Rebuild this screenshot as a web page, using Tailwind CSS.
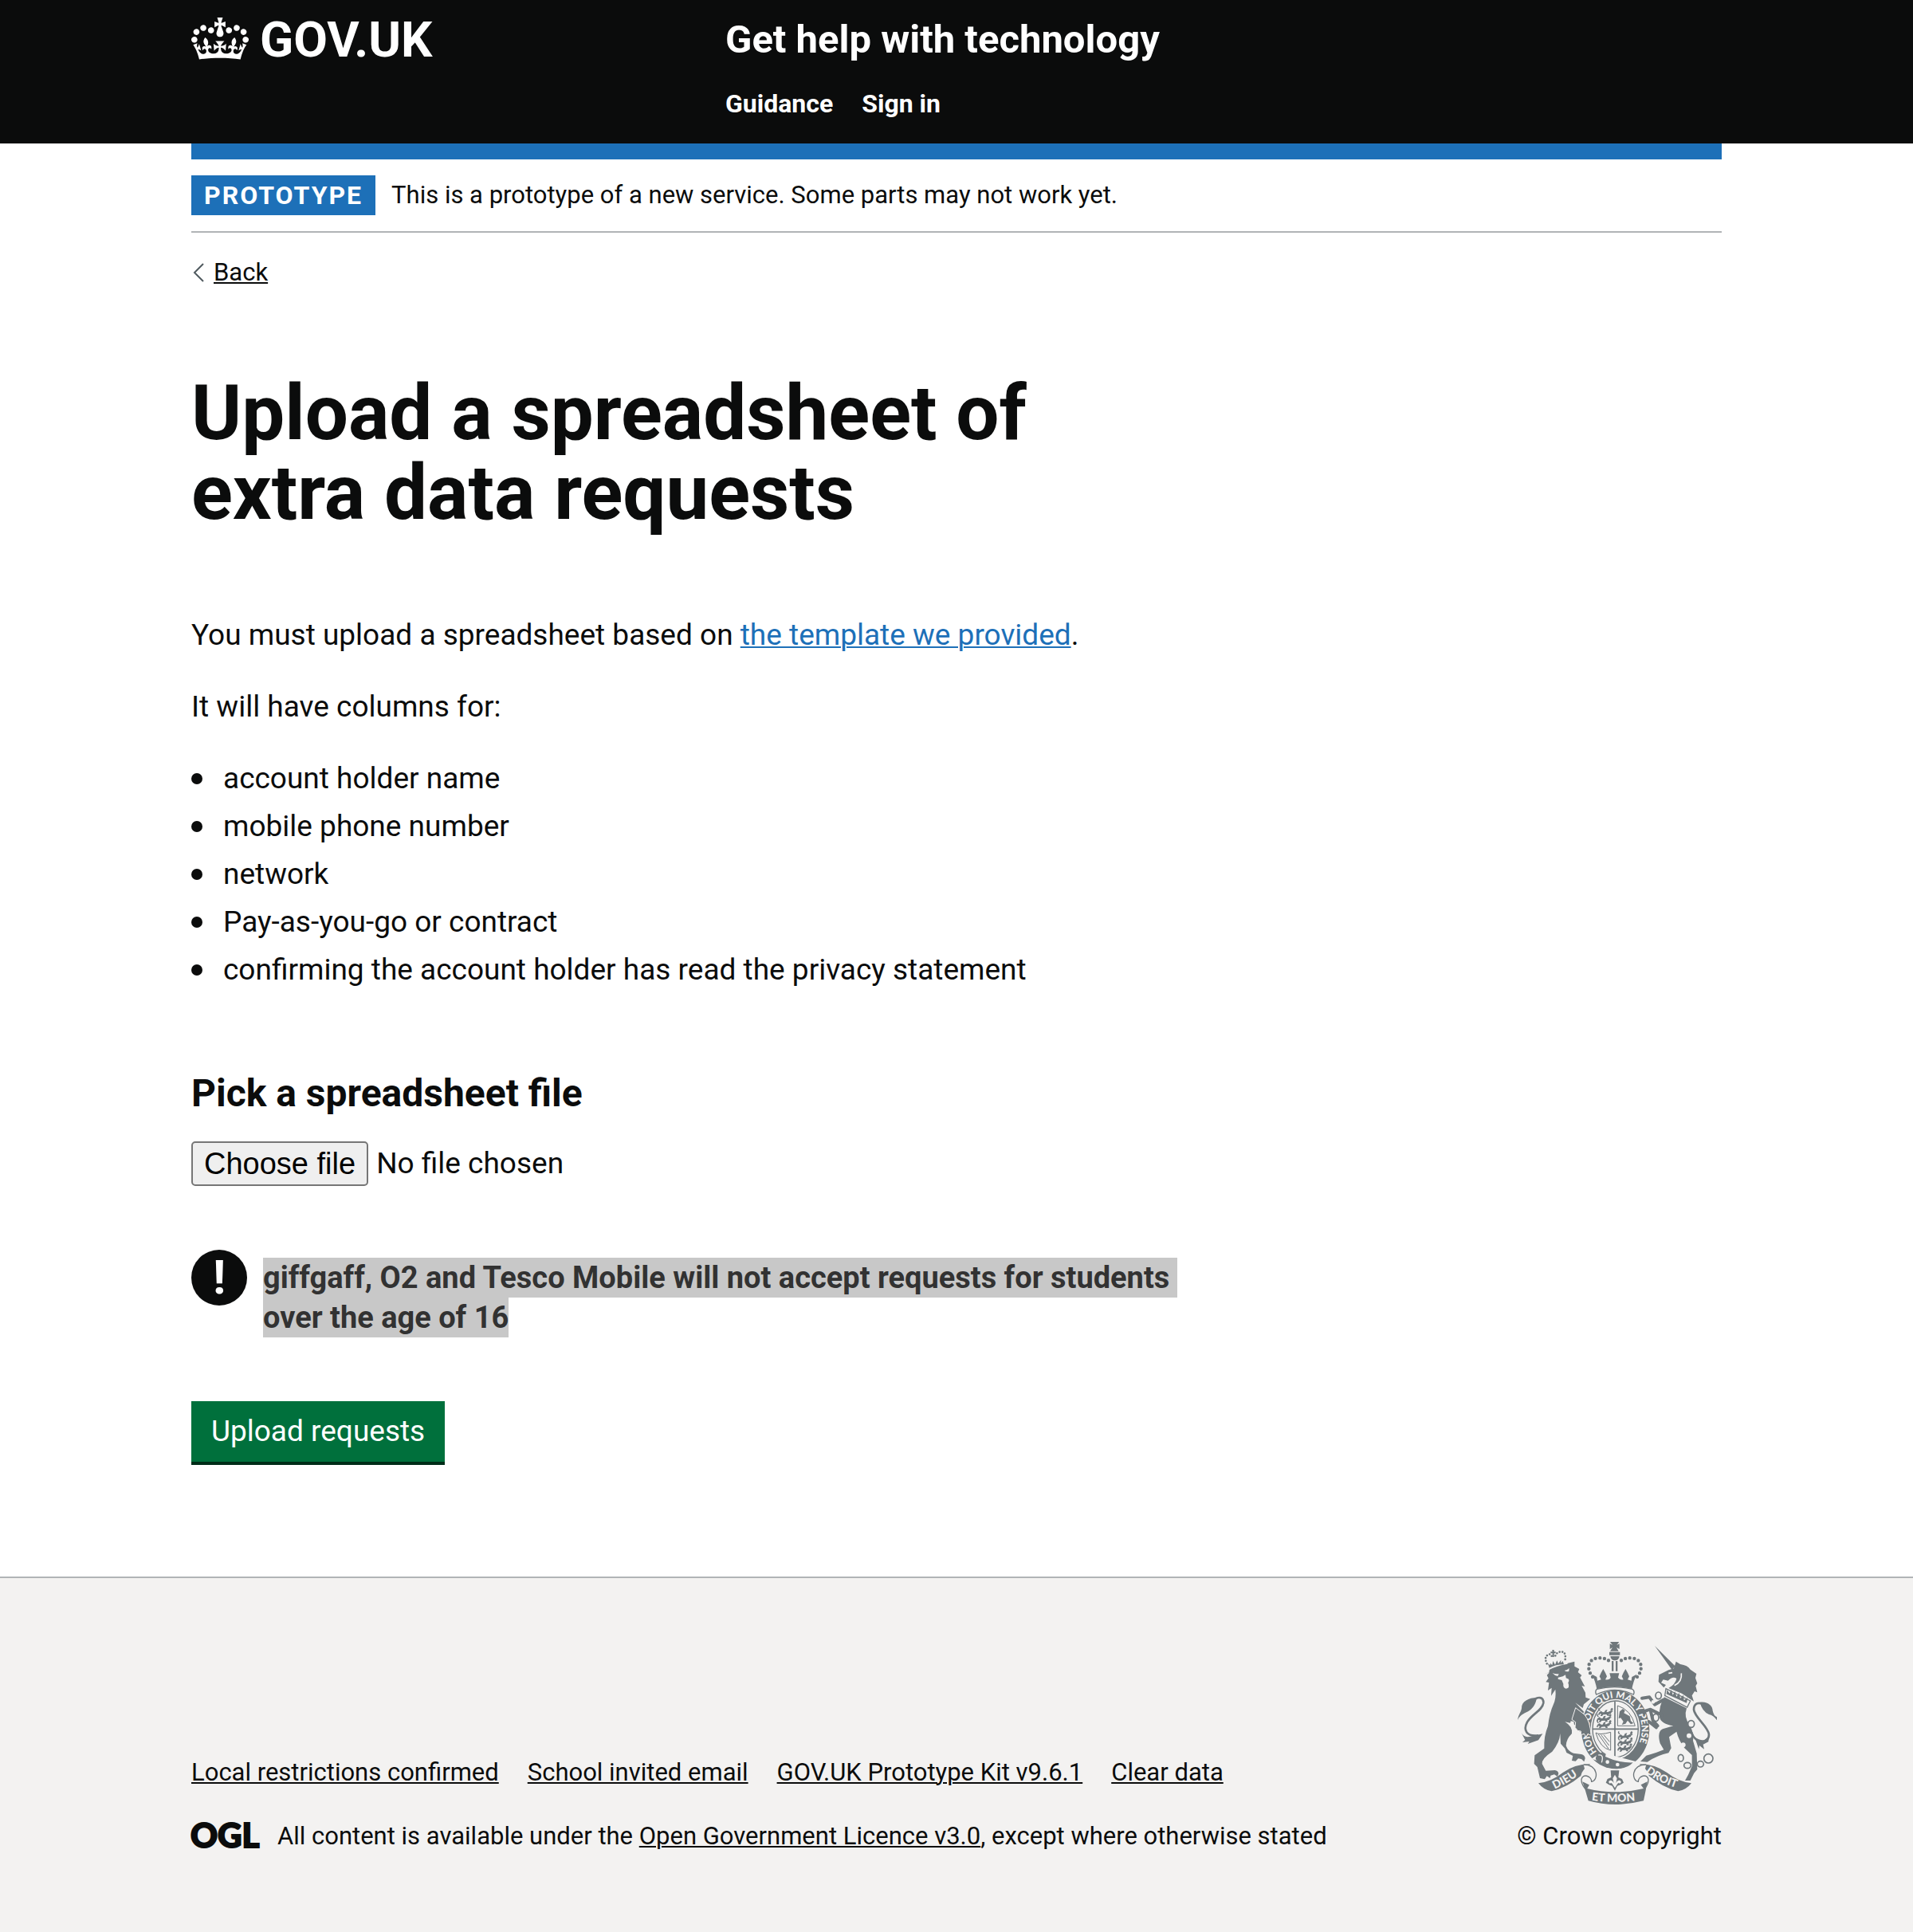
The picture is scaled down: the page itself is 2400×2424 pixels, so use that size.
<!DOCTYPE html>
<html lang="en">
<head>
<meta charset="utf-8">
<meta name="viewport" content="width=device-width, initial-scale=1">
<title>Upload a spreadsheet of extra data requests - Get help with technology</title>
<script src="https://cdn.jsdelivr.net/npm/@tailwindcss/browser@4"></script>
</head>
<body class="bg-white font-['Roboto',sans-serif] text-[37px] leading-[50px] text-[#0b0c0c]">

<header class="bg-[#0b0c0c] px-8 text-white">
  <div class="mx-auto flex max-w-[1920px] pt-5 pb-[30px]">
    <div class="w-1/3">
      <a href="#" class="flex h-[60px] items-center gap-[14px]" aria-label="GOV.UK">
        <svg class="mb-1 h-[53px] w-[72px]" viewBox="0 0 132 97" fill="currentColor" aria-hidden="true"><path fill-rule="evenodd" d="M25 30.2c3.5 1.5 7.7-.2 9.1-3.7 1.5-3.6-.2-7.8-3.9-9.2-3.6-1.4-7.6.3-9.1 3.9-1.4 3.5.3 7.5 3.9 9zM9 39.5c3.6 1.5 7.8-.2 9.2-3.7 1.5-3.6-.2-7.8-3.9-9.1-3.6-1.5-7.6.2-9.1 3.8-1.4 3.5.3 7.5 3.8 9zM4.4 57.2c3.5 1.5 7.7-.2 9.1-3.8 1.5-3.6-.2-7.7-3.9-9.1-3.5-1.5-7.6.3-9.1 3.8-1.4 3.5.3 7.6 3.9 9.1zm38.3-21.4c3.5 1.5 7.7-.2 9.1-3.8 1.5-3.6-.2-7.7-3.9-9.1-3.6-1.5-7.6.3-9.1 3.8-1.3 3.6.4 7.7 3.9 9.1zm64.4-5.6c-3.6 1.5-7.8-.2-9.1-3.7-1.5-3.6.2-7.8 3.8-9.2 3.6-1.4 7.7.3 9.2 3.9 1.3 3.5-.4 7.5-3.9 9zm15.9 9.3c-3.6 1.5-7.7-.2-9.1-3.7-1.5-3.6.2-7.8 3.7-9.1 3.6-1.5 7.7.2 9.2 3.8 1.5 3.5-.3 7.5-3.8 9zm4.7 17.7c-3.6 1.5-7.8-.2-9.2-3.8-1.5-3.6.2-7.7 3.9-9.1 3.6-1.5 7.7.3 9.2 3.8 1.3 3.5-.4 7.6-3.9 9.1zM89.3 35.8c-3.6 1.5-7.8-.2-9.2-3.8-1.4-3.6.2-7.7 3.9-9.1 3.6-1.5 7.7.3 9.2 3.8 1.4 3.6-.3 7.7-3.9 9.1zM69.7 17.7l8.9 4.7V9.3l-8.9 2.8c-.2-.3-.5-.6-.9-.9L72.4 0H59.6l3.5 11.2c-.3.3-.6.5-.9.9l-8.8-2.8v13.1l8.8-4.7c.3.3.6.7.9.9l-5 15.4v.1c-.2.8-.4 1.6-.4 2.4 0 4.1 3.1 7.5 7 8.1h.2c.3 0 .7.1 1 .1.4 0 .7 0 1-.1h.2c4-.6 7.1-4.1 7.1-8.1 0-.8-.1-1.7-.4-2.4V34l-5.1-15.4c.4-.2.7-.6 1-.9zM66 92.8c16.9 0 32.8 1.1 47.1 3.2 4-16.9 8.9-26.7 14-33.5l-9.6-3.4c1 4.9 1.1 7.2 0 10.2-1.5-1.4-3-4.3-4.2-8.7L108.6 76c2.8-2 5-3.2 7.5-3.3-4.4 9.4-10 11.9-13.6 11.2-4.3-.8-6.3-4.6-5.6-7.9 1-4.7 5.7-5.9 8-.5 4.3-8.7-3-11.4-7.6-8.8 7.1-7.2 7.9-13.5 2.1-21.1-8 6.1-8.1 12.3-4.5 20.8-4.7-5.4-12.1-2.5-9.5 6.2 3.4-5.2 7.9-2 7.2 3.1-.6 4.3-6.4 7.8-13.5 7.2-10.3-.9-10.9-8-11.2-13.8 2.5-.5 7.1 1.8 11 7.3L80.2 60c-4.1 4.4-8 5.3-12.3 5.4 1.4-4.4 8-11.6 8-11.6H55.5s6.4 7.2 7.9 11.6c-4.2-.1-8-1-12.3-5.4l1.4 16.4c3.9-5.5 8.5-7.7 10.9-7.3-.3 5.8-.9 12.8-11.1 13.8-7.2.6-12.9-2.9-13.5-7.2-.7-5 3.8-8.3 7.1-3.1 2.7-8.7-4.6-11.6-9.4-6.2 3.7-8.5 3.6-14.7-4.6-20.8-5.8 7.6-5 13.9 2.2 21.1-4.7-2.6-11.9.1-7.7 8.8 2.3-5.5 7.1-4.2 8.1.5.7 3.3-1.3 7.1-5.7 7.9-3.5.7-9-1.8-13.5-11.2 2.5.1 4.7 1.3 7.5 3.3l-4.7-15.4c-1.2 4.4-2.7 7.2-4.3 8.7-1.1-3-.9-5.3 0-10.2l-9.5 3.4c5 6.9 9.9 16.7 14 33.5 14.8-2.1 30.8-3.2 47.7-3.2z"/></svg>
        <span class="text-[62px] leading-[60px] font-bold">GOV.UK</span>
      </a>
    </div>
    <div class="w-2/3 pl-[30px]">
      <a href="#" class="block text-[49px] leading-[60px] font-bold">Get help with technology</a>
      <nav class="mt-[30px] flex gap-9 text-[32px] leading-10 font-bold" aria-label="Menu">
        <a href="#">Guidance</a>
        <a href="#">Sign in</a>
      </nav>
    </div>
  </div>
</header>

<div class="px-8">
  <div class="mx-auto max-w-[1920px]">
    <div class="h-5 bg-[#1d70b8]"></div>
    <div class="flex items-center gap-5 border-b-2 border-[#b1b4b6] py-5 text-[31px] leading-[50px]">
      <strong class="bg-[#1d70b8] px-4 text-[32px] font-bold tracking-[2px] text-white">PROTOTYPE</strong>
      <span>This is a prototype of a new service. Some parts may not work yet.</span>
    </div>
    <a href="#" class="mt-[30px] flex w-fit items-center gap-3 text-[31px] leading-10">
      <svg class="h-6 w-4" viewBox="0 0 16 24" fill="none" stroke="#505a5f" stroke-width="2" aria-hidden="true"><path d="M15 1 4 12l11 11"/></svg>
      <span class="underline decoration-2 underline-offset-2">Back</span>
    </a>

    <main class="w-2/3 pt-[106px] pb-[140px]">
      <h1 class="max-w-[1200px] text-[96px] leading-[100px] font-bold">Upload a spreadsheet of<br>extra data requests</h1>
      <p class="mt-[104px]">You must upload a spreadsheet based on <a href="#" class="text-[#1d70b8] underline decoration-2 underline-offset-2">the template we provided</a>.</p>
      <p class="mt-10">It will have columns for:</p>
      <ul class="mt-10 flex flex-col gap-[10px]">
        <li class="flex items-center gap-[26px] before:size-[14px] before:rounded-full before:bg-[#0b0c0c]">account holder name</li>
        <li class="flex items-center gap-[26px] before:size-[14px] before:rounded-full before:bg-[#0b0c0c]">mobile phone number</li>
        <li class="flex items-center gap-[26px] before:size-[14px] before:rounded-full before:bg-[#0b0c0c]">network</li>
        <li class="flex items-center gap-[26px] before:size-[14px] before:rounded-full before:bg-[#0b0c0c]">Pay-as-you-go or contract</li>
        <li class="flex items-center gap-[26px] before:size-[14px] before:rounded-full before:bg-[#0b0c0c]">confirming the account holder has read the privacy statement</li>
      </ul>
      <form>
        <label for="file" class="mt-[100px] block text-[48px] leading-[60px] font-bold">Pick a spreadsheet file</label>
        <div class="relative mt-[30px] flex h-14 w-fit items-center gap-[10px]">
          <span class="flex h-14 items-center rounded-[5px] border-2 border-[#767676] bg-[#efefef] px-[14px] font-['Liberation_Sans',sans-serif] text-[38px] text-black">Choose file</span>
          <span>No file chosen</span>
          <input id="file" type="file" class="absolute inset-0 size-full cursor-pointer opacity-0">
        </div>
        <div class="mt-20 flex gap-5">
          <span class="flex size-[70px] shrink-0 items-center justify-center rounded-full bg-[#0b0c0c] text-[60px] leading-none font-bold text-white" aria-hidden="true">!</span>
          <p class="pt-[10px] text-[38px] font-bold"><mark class="bg-[#c8c8c8] py-[3px] text-[#323232]">giffgaff, O2 and Tesco Mobile will not accept requests for students&nbsp;<br>over the age of 16</mark></p>
        </div>
        <button type="submit" class="mt-20 block h-[76px] bg-[#00703c] px-[25px] text-white shadow-[0_4px_0_#002d18]">Upload requests</button>
      </form>
    </main>
  </div>
</div>

<footer class="mt-1 border-t-2 border-[#b1b4b6] bg-[#f3f2f1] px-8 pt-20 pb-[100px] text-[31px] leading-10">
  <div class="mx-auto flex max-w-[1920px] items-end justify-between">
    <div class="flex flex-col gap-10">
      <ul class="flex gap-9">
        <li><a href="#" class="underline decoration-2 underline-offset-2">Local restrictions confirmed</a></li>
        <li><a href="#" class="underline decoration-2 underline-offset-2">School invited email</a></li>
        <li><a href="#" class="underline decoration-2 underline-offset-2">GOV.UK Prototype Kit v9.6.1</a></li>
        <li><a href="#" class="underline decoration-2 underline-offset-2">Clear data</a></li>
      </ul>
      <div class="flex items-center gap-[26px]">
        <svg class="h-[34px] w-[82px] overflow-visible font-['Lato',sans-serif] text-[42px] font-black" viewBox="0 0 82 34" fill="#0b0c0c" stroke="#0b0c0c" stroke-width="2" aria-label="Open Government Licence"><text x="-1" y="31">OGL</text></svg>
        <p>All content is available under the <a href="#" class="underline decoration-2 underline-offset-2">Open Government Licence v3.0</a>, except where otherwise stated</p>
      </div>
    </div>
    <a href="#" class="flex w-[260px] flex-col gap-5 text-right">
      <svg class="ml-1 h-[204px] w-[250px] font-['Lato',sans-serif] font-black" viewBox="72 60 750 612" fill="#6f777b" aria-hidden="true">
        <defs>
          <path id="garter" d="M370 474A99 119 0 1 1 510 474"/>
          <path id="ribbon-left" d="M212 614Q262 592 322 546"/>
          <path id="ribbon-mid" d="M350 656Q437 668 530 656"/>
          <path id="ribbon-right" d="M552 550Q600 590 684 614"/>
          <g id="passant"><path d="M0 6l8-6 6 5 20-1 12-6 8 3-6 3-3 6-8 2 2 6h-7l-4-5-12 1-4 5H5l4-7-5-2-3 6-4-2zM2 0q-8-8-2-12h3q-4 4 3 11zM42-4l6-8 5 3-2 8zM20 5l4-8 8-2-4 10z"/></g>
        </defs>

        <!-- Lion -->
        <path d="M172 178l18-2 2-15q30-18 66-20l28-7v18l18 10-5 12 14 12-6 8 18 34-12-3 14 26 1 18 17 6-24 20-4 14-28-20 36 38 20 30 2 20-1 36-22 3-6-16-10-2-12-6 4-14-15-6-2-12-11-2-2 7-20-4q30 18 26 44-22 22-22 46 8 22 28 28l30 4q14 4 14 16l-4 12-10-10-12-2-10 10-14-2 4-18-24-12-6-16-16-18-2-38q-2 34-30 68-40 26-38 46l14 26 34-2q12 2 14 12l-4 12-12-8-14 4-2 10-12-8-8 12-18-4-10-42-12-12 2-32 36-26q-2-46 14-84 6-50 20-80 12-26 8-58l-16 24 2-30-14 10 4-30-12-2 10-14-6-12 8-8z"/>
        <path fill="#f3f2f1" d="M187 162q30-18 72-24l1 5q-42 6-70 23zM203 177q12 5 24 3l-4 9q-12-2-20-12zM248 168q10-1 18-9l-1 11q-8 5-17-2zM224 194l18-4 10-6 2 12 10 4q4 8-2 14 8 22-8 22-12-3-10-18l-6-14-14-4z"/>
        <path d="M191 158l-5-17 8 7 1-8 7 8 3-16 8 14 7-16 5 12 10-14v12l7-8 4 13q-30 0-55 13zM202 90h7v7h6v6h-6v14h-6v-14h-7v-6h7z"/>
        <path fill="none" stroke="#6f777b" stroke-width="8" stroke-linecap="round" stroke-dasharray="0 11" d="M182 142Q168 112 194 106L204 118M214 112L222 100Q256 88 251 126"/>
        <path fill="none" stroke="#6f777b" stroke-width="8" d="M150 412C105 418 92 392 108 362C125 332 165 318 169 290C170 266 148 264 128 282"/>
        <path d="M144 270c-30 0-58 14-57 40-2 16-12 22-15 44 10-22 30-26 45-36 16-12 24-28 27-48zM86 402q10 20 34 14l46-10-16 24-40 14 6-9-26 3 10-9z"/>

        <!-- Unicorn -->
        <path d="M588 75l78 77-14 12zM660 160l8-26 16 10q28 4 38 20l23 16-4 16 7 20-6 10 6 24-10-4-10 16 7 22-45-30-50-20q26-14 30-36-14-10-32 8l-18-4-8 12 18 8-8 10-20-22 2-26 36-18z"/>
        <path fill="none" stroke="#f3f2f1" stroke-width="5" d="M662 224Q692 210 688 178M640 178l14-2"/>
        <path fill="#f3f2f1" stroke="#6f777b" stroke-width="4" d="M630 236l92 46-12 24-84-44z"/>
        <path d="M632 256l2-16 10 14 6-14 6 20 8-14 6 20 10-14 4 20 12-12 2 20 14-10-4 20-80-36z"/>
        <path d="M624 268l84 42q-12 34 12 64 18 34 12 58l14 48 2 60-12 14-14 28h-20l12-22 14-32v-42l-28-26q-22-30-30-62l-28 20 8 42-10 18q-40 8-80 34l-26-2 22-22q34-8 66-22l-14-24q-12-44 10-54l40-12q-46-8-52-32-4-42 18-76z"/>
        <path fill="none" stroke="#6f777b" stroke-width="8" d="M726 400C745 452 794 440 792 408C788 378 738 344 735 315C735 290 755 284 775 298"/>
        <path d="M758 287c30-4 48 14 48 32q4 20 16 24v12q-14-20-30-22-26-12-34-46zM738 418q18 14 36 12l18-14-2 20-20 10 4 18-18-14-2 14z"/>
        <g fill="#f3f2f1"><circle cx="717" cy="413" r="9"/><circle cx="695" cy="448" r="9"/></g>
        <g fill="#f3f2f1" stroke="#6f777b" stroke-width="5"><ellipse cx="602" cy="262" rx="11" ry="13"/><ellipse cx="592" cy="345" rx="11" ry="14"/><ellipse cx="725" cy="369" rx="12" ry="13"/><ellipse cx="686" cy="497" rx="10" ry="13"/><ellipse cx="711" cy="525" rx="13" ry="11"/><ellipse cx="760" cy="520" rx="12" ry="11"/><circle cx="790" cy="499" r="17"/></g>

        <!-- Garter and shield -->
        <ellipse cx="440" cy="390" rx="132" ry="153" fill="#f3f2f1"/>
        <ellipse cx="440" cy="390" rx="128" ry="148"/>
        <ellipse cx="440" cy="388" rx="93" ry="113" fill="#f3f2f1"/>
        <ellipse cx="440" cy="388" rx="86" ry="106" fill="none" stroke="#6f777b" stroke-width="4"/>
        <path fill="none" stroke="#6f777b" stroke-width="5" d="M438 284v212M354 388h172"/>
        <text fill="#f3f2f1" font-size="35"><textPath href="#garter">HONI SOIT QUI MAL Y PENSE</textPath></text>
        <use href="#passant" x="378" y="320"/><use href="#passant" x="372" y="343"/><use href="#passant" x="372" y="366"/>
        <use href="#passant" x="452" y="408"/><use href="#passant" x="452" y="431"/><use href="#passant" x="450" y="454"/>
        <path fill="none" stroke="#6f777b" stroke-width="3" d="M448 376v-76q52 16 66 76zM366 402q14 10 56-2v68q-40-8-56-66zM376 408l38 54M386 410l30 40M396 410l22 26"/>
        <path d="M456 322l12-10 8 6-4 10 22 12 4 18 10 8-10 4-12-14-8 12-14 4 6-12-10-14-8 2z"/>
        <path fill="#f3f2f1" d="M350 500l36-24 130 34-26 34z"/>
        <path d="M370 486q16-18 34-4l-2 10q50 24 104 22-18 22-60 24-40-4-66-26-22-6-10-26z"/>
        <path fill="none" stroke="#f3f2f1" stroke-width="4" d="M376 486q22-4 12 28"/>
        <g fill="#f3f2f1"><circle cx="410" cy="512" r="7"/><circle cx="448" cy="522" r="7"/></g>

        <!-- Lion's and unicorn's forelegs, laid over the garter -->
        <path stroke="#f3f2f1" stroke-width="3" d="M290 308l34 26q22 26 24 78l-12-6-6 12-8-12-12 4v-14l-12-2-10-12 2-20-14-10z"/>
        <path fill="none" stroke="#6f777b" stroke-width="12" stroke-linejoin="round" stroke-linecap="round" d="M620 278l-32 18-20-28-28 4M616 336l-44-22-20 6-4 10M573 322l8 34 18 20M566 360l28 22"/>
        <circle cx="582" cy="286" r="7" fill="#f3f2f1"/>

        <!-- Crown -->
        <path d="M420 60h34l-9 12 10-5v20l-11-6 8 14h-32l9-14-10 6V67l10 5zM417 98h40v12h-40zM421 114h34q-2 16-17 16t-17-16zM426 132h7v38h-7zM441 132h7v38h-7z"/>
        <path fill="none" stroke="#6f777b" stroke-width="13" stroke-linecap="round" stroke-dasharray="0 17" d="M354 192C328 158 338 122 376 121Q400 118 420 134M522 192C548 158 538 122 500 121Q476 118 456 134"/>
        <path d="M352 182l18 10 2 14 14-4-6-12 6-14 8-14 8 14 6 14-6 12q16 2 20-8l-4-16h36l-4 16q6 10 20 8l-6-12 6-14 8-14 8 14 6 14-6 12 14 4 2-14 18-10q-14 30-18 56-64-18-132 0-4-26-18-56z"/>
        <path fill="#f3f2f1" stroke="#6f777b" stroke-width="4" d="M370 238q66-16 134 0 10 8 4 20-70-34-140 0-6-12 2-20z"/>

        <!-- Ribbon and fleur-de-lis -->
        <path d="M150 592q50-6 92-40 50-34 104-32-32 20-36 44-54 46-110 58-30-4-50-30zM726 592q-50-6-92-40-50-34-104-32 32 20 36 44 54 46 110 58 30-4 50-30z"/>
        <path fill="#f3f2f1" stroke="#6f777b" stroke-width="4" d="M320 522c58 0 56 60 30 64 0-22-34-32-38-8 0 24 20 44 36 50M556 522c-58 0-56 60-30 64 0-22 34-32 38-8 0 24-20 44-36 50"/>
        <path d="M316 586q122 68 244 0-6 36-14 72-108 28-208 0-10-36-22-72z"/>
        <path fill="#f3f2f1" d="M346 590q92 0 184 0l16 22q-108 26-212 0z"/>
        <path d="M422 544h32l-3 26 14 6 6 14-12 8-12 4-9 18-10-18-12-4-12-8 6-14 14-6z"/>
        <path fill="#f3f2f1" d="M438 560l8 14-4 18q6-14 16-10 8 6-2 12-2-6-8 0l-10 16-10-16q-6-6-8 0-10-6-2-12 10-4 16 10l-4-18z"/>
        <g fill="#f3f2f1" font-size="42"><text><textPath href="#ribbon-left">DIEU</textPath></text><text><textPath href="#ribbon-mid">ET MON</textPath></text><text><textPath href="#ribbon-right">DROIT</textPath></text></g>
      </svg>
      <span>© Crown copyright</span>
    </a>
  </div>
</footer>
</body>
</html>
